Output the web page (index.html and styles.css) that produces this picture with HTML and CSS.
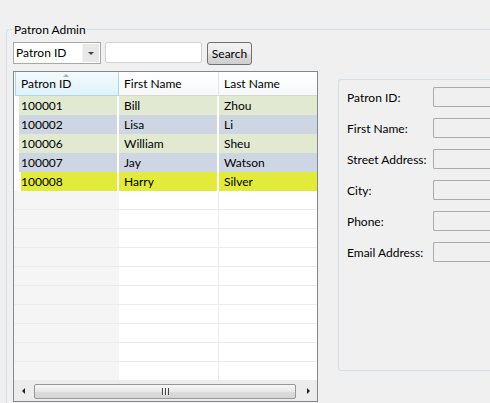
FILE: index.html
```html
<!DOCTYPE html>
<html>
<head>
<meta charset="utf-8">
<link rel="stylesheet" href="styles.css">
</head>
<body>
<fieldset class="admin">
  <legend>Patron Admin</legend>
  <div class="toolbar">
    <div class="combo"><span class="combo-val">Patron ID</span><span class="combo-drop"><i class="down"></i></span></div>
    <input class="search-field" type="text">
    <button class="search-btn">Search</button>
  </div>
  <div class="main">
    <div class="table">
      <div class="thead">
        <div class="th th-sorted">Patron ID<i class="sort"></i></div>
        <div class="th">First Name</div>
        <div class="th">Last Name</div>
      </div>
      <div class="tbody">
        <div class="row green"><div class="c c1"><span>100001</span></div><div class="c c2"><span>Bill</span></div><div class="c c3"><span>Zhou</span></div></div>
        <div class="row blue"><div class="c c1"><span>100002</span></div><div class="c c2"><span>Lisa</span></div><div class="c c3"><span>Li</span></div></div>
        <div class="row green"><div class="c c1"><span>100006</span></div><div class="c c2"><span>William</span></div><div class="c c3"><span>Sheu</span></div></div>
        <div class="row blue"><div class="c c1"><span>100007</span></div><div class="c c2"><span>Jay</span></div><div class="c c3"><span>Watson</span></div></div>
        <div class="row yellow"><div class="c c1"><span>100008</span></div><div class="c c2"><span>Harry</span></div><div class="c c3"><span>Silver</span></div></div>
        <div class="row empty"><div class="c c1"></div><div class="c c2"></div><div class="c c3"></div></div>
        <div class="row empty"><div class="c c1"></div><div class="c c2"></div><div class="c c3"></div></div>
        <div class="row empty"><div class="c c1"></div><div class="c c2"></div><div class="c c3"></div></div>
        <div class="row empty"><div class="c c1"></div><div class="c c2"></div><div class="c c3"></div></div>
        <div class="row empty"><div class="c c1"></div><div class="c c2"></div><div class="c c3"></div></div>
        <div class="row empty"><div class="c c1"></div><div class="c c2"></div><div class="c c3"></div></div>
        <div class="row empty"><div class="c c1"></div><div class="c c2"></div><div class="c c3"></div></div>
        <div class="row empty"><div class="c c1"></div><div class="c c2"></div><div class="c c3"></div></div>
        <div class="row empty"><div class="c c1"></div><div class="c c2"></div><div class="c c3"></div></div>
        <div class="row empty"><div class="c c1"></div><div class="c c2"></div><div class="c c3"></div></div>
      </div>
      <div class="hscroll">
        <i class="arr-left"></i>
        <div class="thumb"><i class="grip"></i></div>
        <i class="arr-right"></i>
      </div>
    </div>
    <div class="details">
      <label class="lbl">Patron ID:</label><input class="fld" type="text">
      <label class="lbl">First Name:</label><input class="fld" type="text">
      <label class="lbl">Street Address:</label><input class="fld" type="text">
      <label class="lbl">City:</label><input class="fld" type="text">
      <label class="lbl">Phone:</label><input class="fld" type="text">
      <label class="lbl">Email Address:</label><input class="fld" type="text">
    </div>
  </div>
</fieldset>
</body>
</html>
```
FILE: styles.css
```css
html, body {
  margin: 0;
  overflow: hidden;
  background: #f0f0f0;
}
body {
  width: 490px;
  height: 403px;
  box-sizing: border-box;
  padding: 22px 0 0 6px;
  font: 12px Lato, "Liberation Sans", sans-serif;
  color: #000;
}
.admin {
  margin: 0;
  padding: 0 0 0 6px;
  width: 484px;
  height: 381px;
  box-sizing: border-box;
  border: 1px solid #d5dfe5;
  border-right: 0;
  border-bottom: 0;
  border-radius: 3px 0 0 0;
  min-width: 0;
}
.admin legend {
  padding: 0 1px;
  line-height: 15px;
}
.toolbar {
  display: flex;
  align-items: flex-start;
  margin-top: 5px;
  height: 23px;
}
.combo {
  width: 88px;
  height: 22px;
  box-sizing: border-box;
  border: 1px solid #a9a9a9;
  background: #fff;
  display: flex;
}
.combo-val {
  flex: 1;
  padding-left: 2px;
  line-height: 20px;
}
.combo-drop {
  width: 16px;
  background: #e8e8e8;
  border-left: 1px solid #f4f4f4;
  margin: 1px;
  display: flex;
  align-items: center;
  justify-content: center;
}
.down {
  width: 0;
  height: 0;
  border-top: 3px solid #444;
  border-left: 3px solid transparent;
  border-right: 3px solid transparent;
  margin-top: 1px;
}
.search-field {
  margin: 0 0 0 4px;
  width: 97px;
  height: 21px;
  box-sizing: border-box;
  border: 1px solid #cfd3d8;
  border-radius: 2px;
  background: #fff;
  padding: 0;
}
.search-btn {
  margin: 0 0 0 5px;
  width: 45px;
  height: 23px;
  box-sizing: border-box;
  border: 1px solid #707070;
  border-radius: 3px;
  background: linear-gradient(#f2f2f2 0%, #ebebeb 50%, #dddddd 51%, #cfcfcf 100%);
  font: inherit;
  color: #000;
  padding: 0;
}
.main {
  display: flex;
  align-items: flex-start;
  margin-top: 6px;
}
.table {
  flex: none;
  width: 305px;
  height: 331px;
  box-sizing: border-box;
  border: 1px solid #828790;
  background: #fff;
  display: flex;
  flex-direction: column;
}
.thead {
  display: grid;
  grid-template-columns: 105px 100px 98px;
  height: 24px;
}
.th {
  position: relative;
  box-sizing: border-box;
  height: 24px;
  line-height: 23px;
  padding-left: 5px;
  background: linear-gradient(#ffffff, #f7f8f9);
  border-right: 1px solid #e3e5e8;
  border-bottom: 1px solid #d5d5d5;
}
.th:last-child {
  border-right: 0;
}
.th-sorted {
  padding-left: 5px;
  background: linear-gradient(#f4fafd, #e0f1fb);
  border: 1px solid #a9d9f1;
  border-top: 0;
  margin-left: 1px;
}
.sort {
  position: absolute;
  left: 47px;
  top: 2px;
  width: 0;
  height: 0;
  border-bottom: 3px solid #97b3c8;
  border-left: 3px solid transparent;
  border-right: 3px solid transparent;
}
.tbody {
  display: flex;
  flex-direction: column;
}
.row {
  display: grid;
  grid-template-columns: 105px 100px 98px;
  height: 19px;
}
.c {
  box-sizing: border-box;
  height: 19px;
}
.c span {
  display: block;
  height: 19px;
  line-height: 19px;
  padding-left: 5px;
}
.row .c1 { padding: 0 2px 0 5px; }
.row .c1 span { padding-left: 2px; }
.row .c2 { padding-right: 2px; }
.green span { background: #e1e9d1; }
.blue span { background: #cfd6e3; }
.yellow span { background: #e2ea3a; }
.yellow .c1 { padding-left: 7px; }
.yellow .c1 span { padding-left: 0; }
.empty .c {
  border-bottom: 1px solid #ececec;
}
.empty .c1 {
  background: #f5f5f5;
}
.empty .c2 {
  border-right: 1px solid #ececec;
}
.hscroll {
  height: 20px;
  background: #ececec;
  display: flex;
  align-items: center;
  padding-left: 8px;
}
.arr-left {
  width: 0;
  height: 0;
  border-right: 3px solid #222;
  border-top: 3px solid transparent;
  border-bottom: 3px solid transparent;
}
.arr-right {
  width: 0;
  height: 0;
  margin-left: 11px;
  border-left: 3px solid #222;
  border-top: 3px solid transparent;
  border-bottom: 3px solid transparent;
}
.thumb {
  margin-left: 9px;
  width: 262px;
  height: 15px;
  box-sizing: border-box;
  border: 1px solid #989898;
  border-radius: 2px;
  background: linear-gradient(#f6f6f6, #e8e8e8 50%, #dcdcdc 51%, #d4d4d4);
  display: flex;
  align-items: center;
  justify-content: center;
}
.grip {
  width: 7px;
  height: 7px;
  background: repeating-linear-gradient(to right, #444 0 1px, #f4f4f4 1px 2px, transparent 2px 3px);
}
.details {
  flex: 1;
  min-width: 0;
  margin: 8px 0 0 20px;
  height: 292px;
  box-sizing: border-box;
  border: 1px solid #d5dfe5;
  border-right: 0;
  border-radius: 3px 0 0 3px;
  padding: 7px 0 0 8px;
  display: grid;
  grid-template-columns: 86px 1fr;
  grid-auto-rows: 20px;
  row-gap: 11px;
  align-items: center;
  align-content: start;
  overflow: hidden;
}
.lbl {
  white-space: nowrap;
}
.fld {
  margin: 0;
  padding: 0;
  width: 100%;
  min-width: 0;
  height: 20px;
  box-sizing: border-box;
  border: 1px solid #ababab;
  border-right: 0;
  border-radius: 2px 0 0 2px;
  background: #f0f0f0;
}
```
